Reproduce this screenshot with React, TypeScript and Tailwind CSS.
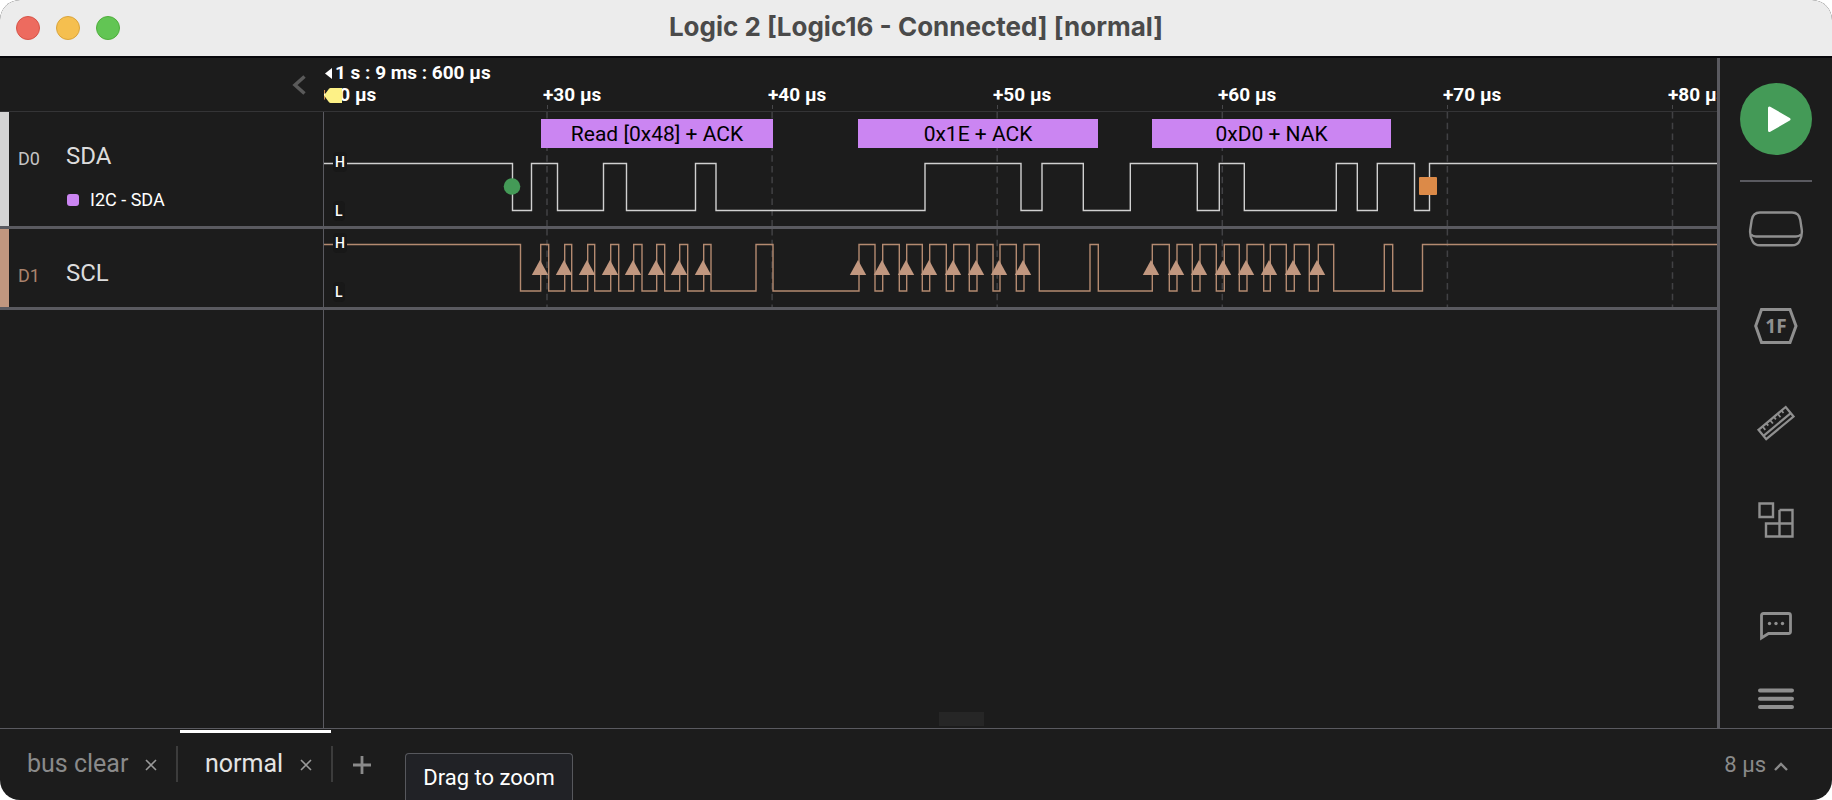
import React from "react";

const PANEL_WIDTH = 324;
const TICK_START = -6;
const TICK_GAP = 225;

const ticks = ["+20 µs", "+30 µs", "+40 µs", "+50 µs", "+60 µs", "+70 µs", "+80 µs"];

const sdaEdges = [
  512.5, 531.5, 557.5, 603.5, 626.5, 695.5, 716, 925, 1021, 1042, 1083.3, 1130.3, 1197.3, 1219.3, 1244.3, 1336.3,
  1357.3, 1377.3, 1414.5, 1429.5,
];

const sclEdges = [
  520.5, 540.7, 548.7, 564.7, 571.7, 587.7, 594.7, 610.7, 618.7, 633.7, 642, 656.7, 664.7, 679.7, 687.7, 703.7, 711,
  756, 773, 859, 875, 882.7, 899.3, 906.7, 922.3, 929.7, 946.3, 953.7, 969.3, 977, 993, 1000, 1016.3, 1024, 1039.3,
  1090, 1098.3, 1152.3, 1169.3, 1177, 1192.3, 1200, 1216.3, 1224.3, 1239.3, 1247, 1263.7, 1270.3, 1286.3, 1294.3,
  1309.3, 1318.3, 1333.7, 1384.3, 1392.7, 1422.5,
];

const clockMarks = [
  540, 564, 587, 610, 633, 656, 679, 703, 858, 882, 906, 929, 953, 976, 999, 1023, 1151, 1176, 1199, 1223, 1246, 1269,
  1293, 1317,
];

const frames = [
  { text: "Read [0x48] + ACK", start: 541, end: 773 },
  { text: "0x1E + ACK", start: 858, end: 1098 },
  { text: "0xD0 + NAK", start: 1152, end: 1391 },
];

function wavePath(edges: number[], high: number, low: number) {
  let level = high;
  let d = `M0 ${high}`;
  for (const edge of edges) {
    const x = edge - PANEL_WIDTH;
    level = level === high ? low : high;
    d += `H${x}V${level}`;
  }
  return `${d}H6000`;
}

function GridLines() {
  return (
    <g stroke="#414144" strokeWidth="1.5" strokeDasharray="6.5 4.3">
      {ticks.slice(1).map((tick, i) => {
        const x = 223 + i * 225.1;
        return <line key={tick} x1={x} x2={x} y1="0" y2="200" />;
      })}
    </g>
  );
}

function Level({ children }: { children: string }) {
  return (
    <span className="rounded-sm bg-[#181818] px-0.5 text-[14px] font-medium leading-5 text-white">{children}</span>
  );
}

function TimeRuler() {
  return (
    <div className="relative h-full min-w-0 flex-1 overflow-hidden text-[19px] font-bold leading-5 text-white">
      <div className="flex items-center gap-[3px] pt-1">
        <svg className="ml-px h-[11px] w-[7px]" viewBox="0 0 7 11" fill="#fff" aria-hidden="true">
          <path d="M0 5.5L7 0V11Z" />
        </svg>
        <span className="leading-[22px]">1 s : 9 ms : 600 µs</span>
      </div>
      {ticks.map((tick, i) => (
        <React.Fragment key={tick}>
          <span className="absolute top-[27px] whitespace-nowrap" style={{ left: TICK_START + i * TICK_GAP }}>
            {tick}
          </span>
          <span
            className="absolute top-[47px] h-1 w-px bg-[#47474a]"
            style={{ left: TICK_START + 4 + i * TICK_GAP }}
          />
        </React.Fragment>
      ))}
      <svg className="absolute left-0 top-[30px] h-[15px] w-[18px]" viewBox="0 0 18 15" fill="#fdf186" aria-hidden="true">
        <path d="M0 7.5L5 0.8Q5.6 0 6.5 0H18V15H6.5Q5.6 15 5 14.2Z" />
      </svg>
    </div>
  );
}

function DataTrack() {
  return (
    <div className="relative min-w-0 flex-1 overflow-hidden">
      <svg className="block h-full w-full" aria-label="SDA signal">
        <GridLines />
        <path d={wavePath(sdaEdges, 51.5, 98.5)} fill="none" stroke="#d0d0d0" strokeWidth="1.4" />
        <circle cx="188" cy="74.5" r="8.3" fill="#449a57" />
        <rect x="1095" y="65" width="18" height="18" rx="1" fill="#dc8a48" />
      </svg>
      {frames.map((frame) => (
        <span
          key={frame.text}
          className="absolute top-[7px] h-[29px] bg-[#cb85f2] text-center text-[21px] leading-[30px] text-black"
          style={{ left: frame.start - PANEL_WIDTH, width: frame.end - frame.start }}
        >
          {frame.text}
        </span>
      ))}
      <div className="absolute left-[9px] top-10 flex flex-col items-start gap-[29px]">
        <Level>H</Level>
        <Level>L</Level>
      </div>
    </div>
  );
}

function ClockTrack() {
  return (
    <div className="relative min-w-0 flex-1 overflow-hidden">
      <svg className="block h-full w-full" aria-label="SCL signal">
        <GridLines />
        <path d={wavePath(sclEdges, 15.5, 62)} fill="none" stroke="#b48a70" strokeWidth="1.4" />
        {clockMarks.map((mark) => {
          const x = mark - PANEL_WIDTH;
          return <path key={mark} d={`M${x} 31L${x + 8.2} 46H${x - 8.2}Z`} fill="#c1977f" />;
        })}
      </svg>
      <div className="absolute left-[9px] top-1 flex flex-col items-start gap-[29px]">
        <Level>H</Level>
        <Level>L</Level>
      </div>
    </div>
  );
}

function ToolSidebar() {
  const button = "flex items-center justify-center";
  return (
    <aside className="flex w-[115px] shrink-0 flex-col items-center border-l-[3px] border-[#5a5a60] pt-[25px]">
      <button aria-label="Start capture" className="flex size-[72px] items-center justify-center rounded-full bg-[#449a57]">
        <svg width="72" height="72" viewBox="0 0 72 72" fill="#fff" stroke="#fff" strokeWidth="3" strokeLinejoin="round">
          <path d="M29.5 25V47.5L49 36.2Z" />
        </svg>
      </button>
      <hr className="mt-[25px] h-0.5 w-[72px] border-0 bg-[#5a5a60]" />
      <button aria-label="Device settings" className={`${button} mt-6 h-[46px] w-[72px]`}>
        <svg width="56" height="38" viewBox="0 0 56 38" fill="none" stroke="#8f8f8f" strokeWidth="2.4">
          <path d="M12 2.5H44C49 2.500 51.500 5 52.300 10L53.800 20C54.300 25 53 28.500 51.300 31.500C50 34.200 47.500 35.300 44 35.300H12C8.500 35.300 6 34.200 4.700 31.500C3 28.500 1.700 25 2.200 20L3.700 10C4.500 5 7 2.500 12 2.500Z" />
          <path d="M3 24.500Q5 26.500 8 26.500H48Q51 26.500 53 24.500" />
        </svg>
      </button>
      <button aria-label="Analyzers" className={`${button} mt-[51px] h-[46px] w-[72px]`}>
        <svg width="44" height="36" viewBox="0 0 44 36" fill="none" stroke="#8f8f8f" strokeWidth="3">
          <path d="M7.500 1.500H36L42 18L36 34.500H7.500L1.700 18Z" />
          <text
            x="22"
            y="25"
            textAnchor="middle"
            fill="#8f8f8f"
            stroke="none"
            className="font-['Noto_Sans',sans-serif] text-[19px] font-bold"
          >
            1F
          </text>
        </svg>
      </button>
      <button aria-label="Measurements" className={`${button} mt-[51px] h-[46px] w-[72px]`}>
        <svg width="38" height="36" viewBox="0 0 38 36" fill="none" stroke="#8f8f8f" strokeWidth="2.200">
          <path d="M1.500 24.800L28.700 2L36.500 11.500L9.200 34.200Z" />
          <path d="M6.500 30.900L33.800 8.100" />
          <path
            strokeWidth="1.800"
            d="M5.500 21.500L8.300 24.900M9.300 18.300L11.300 20.700M13.100 15.100L15.900 18.500M16.900 11.900L18.900 14.300M20.700 8.800L23.500 12.200M24.500 5.600L26.500 8"
          />
        </svg>
      </button>
      <button aria-label="Extensions" className={`${button} mt-[51px] h-[46px] w-[72px]`}>
        <svg width="36" height="36" viewBox="0 0 36 36" fill="none" stroke="#8f8f8f" strokeWidth="2.400">
          <path d="M1.500 1.500H15V15H1.500Z" />
          <path d="M21.500 8H34.500V34.500H8V21.500H34.500M21.500 8V34.500" />
        </svg>
      </button>
      <div className="mt-auto flex flex-col items-center gap-10 pb-[13px]">
        <button aria-label="Feedback" className={`${button} h-8 w-[72px]`}>
          <svg width="32" height="30" viewBox="0 0 32 30" fill="none" stroke="#8f8f8f" strokeWidth="2.800">
            <path d="M1.500 26V3.500Q1.500 1.500 3.500 1.500H28.500Q30.500 1.500 30.500 3.500V19.500Q30.500 21.500 28.500 21.500H8.500Z" />
            <g fill="#8f8f8f" stroke="none">
              <circle cx="9.500" cy="11.500" r="1.700" />
              <circle cx="16" cy="11.500" r="1.700" />
              <circle cx="22.500" cy="11.500" r="1.700" />
            </g>
          </svg>
        </button>
        <button aria-label="Main menu" className={`${button} h-8 w-[72px]`}>
          <svg width="36" height="22" viewBox="0 0 36 22" stroke="#8f8f8f" strokeWidth="4" strokeLinecap="round">
            <path d="M2 2.500H34M2 10.700H34M2 19H34" />
          </svg>
        </button>
      </div>
    </aside>
  );
}

function CloseIcon() {
  return (
    <svg width="12" height="12" viewBox="0 0 12 12" stroke="#9a9a9a" strokeWidth="1.600" aria-hidden="true">
      <path d="M1 1L11 11M11 1L1 11" />
    </svg>
  );
}

function SessionBar() {
  return (
    <footer className="relative flex h-[72px] shrink-0 items-stretch border-t border-[#5a5a60] text-[25px] text-[#8a8a8a]">
      <div className="flex w-[180px] items-center pb-[2px] pl-[27px]">
        <button className="w-[103px] whitespace-nowrap text-left leading-7">bus clear</button>
        <button aria-label="Close bus clear" className="ml-[15px] pt-0.5">
          <CloseIcon />
        </button>
        <span className="ml-auto mr-0.5 h-9 w-0.5 bg-[#3c3c3c]" />
      </div>
      <div className="relative flex w-[153px] items-center pb-[2px] pl-[25px]">
        <span className="absolute left-0 top-px h-[3px] w-[151px] bg-white" />
        <button className="w-20 text-left leading-7 text-[#e4e4e4]">normal</button>
        <button aria-label="Close normal" className="ml-[15px] pt-0.5">
          <CloseIcon />
        </button>
        <span className="ml-auto h-9 w-0.5 bg-[#3c3c3c]" />
      </div>
      <button aria-label="Add session" className="ml-5">
        <svg width="18" height="18" viewBox="0 0 18 18" stroke="#8a8a8a" strokeWidth="2.800">
          <path d="M9 0V18M0 9H18" />
        </svg>
      </button>
      <div
        role="tooltip"
        className="absolute bottom-0 left-[405px] h-[47px] w-[168px] rounded-t border border-b-0 border-[#57585d] bg-[#212226] text-center text-[22px] leading-[48px] text-white"
      >
        Drag to zoom
      </div>
      <button className="ml-auto mr-11 flex items-center gap-2 text-[22px]">
        <span className="leading-7">8 µs</span>
        <svg className="mt-1" width="14" height="9" viewBox="0 0 14 9" fill="none" stroke="#8a8a8a" strokeWidth="2.400">
          <path d="M1 8L7 2L13 8" />
        </svg>
      </button>
    </footer>
  );
}

export default function App() {
  return (
    <div className="h-screen bg-white font-['Roboto',sans-serif]">
      <div className="flex h-full flex-col overflow-hidden rounded-[20px] bg-[#1c1c1c]">
        <header className="flex h-[58px] shrink-0 items-center border-b-2 border-[#08080b] bg-[#ececec] pl-4">
          <div className="flex flex-1 gap-4">
            <button aria-label="Close window" className="size-6 rounded-full border border-[#d65448] bg-[#ed6b5f]" />
            <button aria-label="Minimize window" className="size-6 rounded-full border border-[#d9a43c] bg-[#f5bf4f]" />
            <button aria-label="Zoom window" className="size-6 rounded-full border border-[#4fae3c] bg-[#62c554]" />
          </div>
          <h1 className="pb-0.5 font-['Inter',sans-serif] text-[26px] font-bold leading-8 text-[#4a4a4a]">
            Logic 2 [Logic16 - Connected] [normal]
          </h1>
          <div className="flex-1 pr-4" />
        </header>

        <div className="flex min-h-0 flex-1">
          <main className="flex min-w-0 flex-1 flex-col">
            <div className="flex h-[54px] shrink-0 border-b border-[#343436]">
              <div className="flex w-[324px] shrink-0 items-center justify-end pr-[18px]">
                <button aria-label="Collapse channel list">
                  <svg width="14" height="20" viewBox="0 0 14 20" fill="none" stroke="#5a5a5a" strokeWidth="3.500">
                    <path d="M12.500 1.500L3 10L12.500 18.500" />
                  </svg>
                </button>
              </div>
              <TimeRuler />
            </div>

            <section className="flex h-[117px] shrink-0 border-b-[3px] border-[#5a5a60]">
              <div className="flex w-[324px] shrink-0 border-l-[9px] border-r border-l-[#d4d4d4] border-r-[#5a5a60] pl-[9px]">
                <span className="w-12 pt-[35px] text-[18px] leading-6 text-[#c4c4c4]">D0</span>
                <div className="flex flex-col gap-4 pt-[30px]">
                  <span className="text-[24px] leading-7 text-[#dcdcdc]">SDA</span>
                  <div className="flex items-center gap-[11px]">
                    <span className="ml-px size-3 rounded-[3px] bg-[#cb85f2]" />
                    <span className="text-[18px] leading-7 text-white">I2C - SDA</span>
                  </div>
                </div>
              </div>
              <DataTrack />
            </section>

            <section className="flex h-[81px] shrink-0 border-b-[3px] border-[#5a5a60]">
              <div className="flex w-[324px] shrink-0 border-l-[9px] border-r border-l-[#c1977f] border-r-[#5a5a60] pl-[9px]">
                <span className="w-12 pt-[35px] text-[18px] leading-6 text-[#a9836d]">D1</span>
                <span className="pt-[30px] text-[24px] leading-7 text-[#dcdcdc]">SCL</span>
              </div>
              <ClockTrack />
            </section>

            <div className="flex min-h-0 flex-1">
              <div className="w-[324px] shrink-0 border-r border-[#5a5a60]" />
              <div className="flex min-w-0 flex-1 items-end pb-0.5 pl-[615px]">
                <div className="h-3.5 w-[45px] bg-[#262626]" />
              </div>
            </div>
          </main>
          <ToolSidebar />
        </div>

        <SessionBar />
      </div>
    </div>
  );
}
